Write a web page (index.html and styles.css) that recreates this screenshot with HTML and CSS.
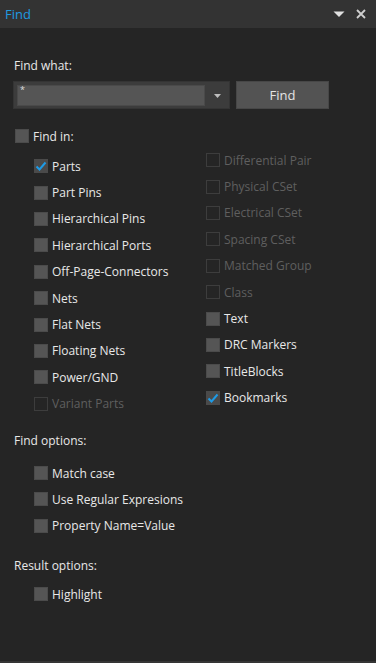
FILE: index.html
```html
<!DOCTYPE html>
<html>
  <head>
    <meta charset="utf-8">
    <link rel="stylesheet" href="styles.css">
  </head>
  <body>
    <div class="panel">

      <div class="titlebar">
        <span class="title">Find</span>
        <span class="title-tools">
          <svg class="tool" width="12" height="8" viewBox="0 0 12 8"><path d="M0.5 1.5 H11.5 L6 7 Z" fill="#e0e0e0"/></svg>
          <svg class="tool" width="10" height="10" viewBox="0 0 10 10"><path d="M1 1 L9 9 M9 1 L1 9" stroke="#cfcfcf" stroke-width="1.8"/></svg>
        </span>
      </div>

      <div class="content">
        <div class="label find-what">Find what:</div>

        <div class="search">
          <div class="combo">
            <div class="combo-input">*</div>
            <div class="combo-arrow">
              <svg width="7" height="4" viewBox="0 0 7 4"><path d="M0 0 H7 L3.5 4 Z" fill="#bdbdbd"/></svg>
            </div>
          </div>
          <div class="find-btn">Find</div>
        </div>

        <div class="row find-in"><span class="box"></span>Find in:</div>

        <div class="columns">
          <div class="col col-left">
            <div class="row"><span class="box checked"><svg width="14" height="14" viewBox="0 0 14 14"><path d="M2.5 7.5 L5.5 10.5 L11.5 3.5" fill="none" stroke="#1e9be6" stroke-width="2"/></svg></span>Parts</div>
            <div class="row"><span class="box"></span>Part Pins</div>
            <div class="row"><span class="box"></span>Hierarchical Pins</div>
            <div class="row"><span class="box"></span>Hierarchical Ports</div>
            <div class="row"><span class="box"></span>Off-Page-Connectors</div>
            <div class="row"><span class="box"></span>Nets</div>
            <div class="row"><span class="box"></span>Flat Nets</div>
            <div class="row"><span class="box"></span>Floating Nets</div>
            <div class="row"><span class="box"></span>Power/GND</div>
            <div class="row disabled"><span class="box"></span>Variant Parts</div>
          </div>
          <div class="col col-right">
            <div class="row disabled"><span class="box"></span>Differential Pair</div>
            <div class="row disabled"><span class="box"></span>Physical CSet</div>
            <div class="row disabled"><span class="box"></span>Electrical CSet</div>
            <div class="row disabled"><span class="box"></span>Spacing CSet</div>
            <div class="row disabled"><span class="box"></span>Matched Group</div>
            <div class="row disabled"><span class="box"></span>Class</div>
            <div class="row"><span class="box"></span>Text</div>
            <div class="row"><span class="box"></span>DRC Markers</div>
            <div class="row"><span class="box"></span>TitleBlocks</div>
            <div class="row"><span class="box checked"><svg width="14" height="14" viewBox="0 0 14 14"><path d="M2.5 7.5 L5.5 10.5 L11.5 3.5" fill="none" stroke="#1e9be6" stroke-width="2"/></svg></span>Bookmarks</div>
          </div>
        </div>

        <div class="label section">Find options:</div>
        <div class="options">
          <div class="row"><span class="box"></span>Match case</div>
          <div class="row"><span class="box"></span>Use Regular Expresions</div>
          <div class="row"><span class="box"></span>Property Name=Value</div>
        </div>

        <div class="label section result">Result options:</div>
        <div class="options result-list">
          <div class="row"><span class="box"></span>Highlight</div>
        </div>
      </div>

    </div>
  </body>
</html>
```

FILE: styles.css
```css
html, body {
  margin: 0;
  padding: 0;
  background: #252525;
}

body {
  font-family: "Open Sans", "Noto Sans", sans-serif;
  font-size: 12px;
  color: #e8e8e8;
}

.panel {
  height: 663px;
  box-sizing: border-box;
  border-bottom: 2px solid #353535;
}

.titlebar {
  height: 28px;
  background: #333333;
  display: flex;
  align-items: center;
  justify-content: space-between;
  padding: 0 10px 0 5px;
}

.title {
  color: #1e9be0;
  font-size: 13px;
}

.title-tools {
  display: flex;
  align-items: center;
  gap: 11px;
}

.content {
  padding: 0 14px 0 13px;
}

.label {
  height: 20px;
  line-height: 20px;
  padding-left: 1px;
}

.find-what {
  margin-top: 28px;
}

.search {
  display: flex;
  margin-top: 5px;
  height: 28px;
}

.combo {
  width: 217px;
  box-sizing: border-box;
  background: #3c3c3c;
  border: 1px solid #343434;
  display: flex;
  padding: 3px 0 2px 3px;
}

.combo-input {
  flex: 1;
  background: #555555;
  border: 1px solid #4a4a4a;
  font-size: 9px;
  line-height: 8px;
  padding-left: 2px;
  color: #ddd;
}

.combo-arrow {
  width: 24px;
  display: flex;
  align-items: center;
  justify-content: center;
}

.find-btn {
  width: 93px;
  margin-left: 6px;
  box-sizing: border-box;
  background: #535353;
  border: 1px solid #474747;
  text-align: center;
  line-height: 26px;
  font-size: 13px;
  color: #e4e4e4;
}

.row {
  display: flex;
  align-items: center;
  height: 26.4px;
}

.box {
  width: 14px;
  height: 14px;
  box-sizing: border-box;
  background: #555555;
  border: 1px solid #4b4b4b;
  margin-right: 4px;
  display: flex;
}

.box.checked {
  background: #4a4a4a;
  border: none;
}

.disabled {
  color: #5f5f5f;
}

.disabled .box {
  background: transparent;
  border: 1px solid #3d3d3d;
}

.find-in {
  margin-top: 16px;
  height: 22px;
  padding-left: 2px;
}

.columns {
  display: flex;
}

.col-left {
  width: 172px;
  padding-left: 21px;
  padding-top: 6px;
}

.section {
  margin-top: 14px;
}

.options {
  padding-left: 21px;
  margin-top: 9px;
}

.result {
  margin-top: 17px;
}

.result-list {
  margin-top: 5px;
}
```
